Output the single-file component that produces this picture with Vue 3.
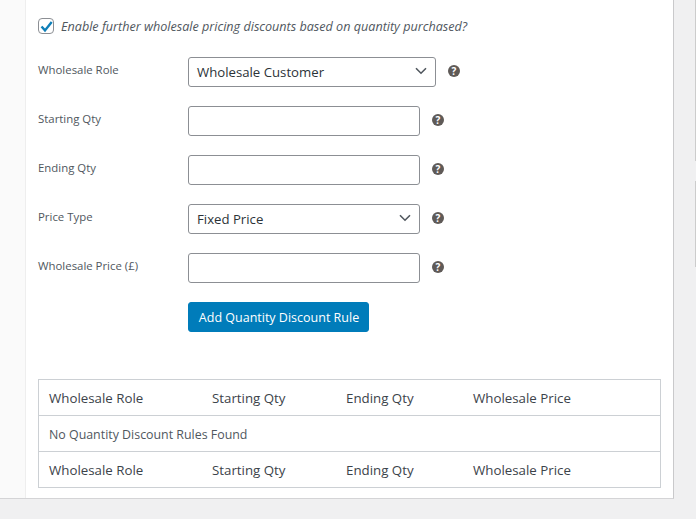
<template>
  <div class="page">
    <div class="panel">
      <div class="side"></div>
      <div class="content">
        <label class="enable">
          <span class="check">
            <svg width="13" height="13" viewBox="0 0 12 12"><path d="M1.4 6 L4.6 9.6 L10.8 1.8" fill="none" stroke="#0f7fb8" stroke-width="2.2" /></svg>
          </span>
          <em>Enable further wholesale pricing discounts based on quantity purchased?</em>
        </label>

        <div v-for="field in fields" :key="field.label" class="row">
          <span class="label">{{ field.label }}</span>
          <div class="control" :class="{ wide: field.wide }">
            {{ field.value }}
            <svg v-if="field.value" class="chev" width="12" height="8" viewBox="0 0 12 8"><path d="M1 1.2 L6 6.2 L11 1.2" fill="none" stroke="#50575e" stroke-width="1.6" /></svg>
          </div>
          <span class="help">?</span>
        </div>

        <button class="add">Add Quantity Discount Rule</button>

        <div class="rules">
          <div class="tr">
            <span v-for="c in columns" :key="c">{{ c }}</span>
          </div>
          <div class="tr empty">No Quantity Discount Rules Found</div>
          <div class="tr">
            <span v-for="c in columns" :key="c">{{ c }}</span>
          </div>
        </div>
      </div>
    </div>
    <div class="rail">
      <div class="box first"></div>
      <div class="box second"><div class="part"></div></div>
    </div>
  </div>
</template>

<script setup>
const fields = [
  { label: "Wholesale Role", value: "Wholesale Customer", wide: true },
  { label: "Starting Qty" },
  { label: "Ending Qty" },
  { label: "Price Type", value: "Fixed Price" },
  { label: "Wholesale Price (£)" },
];

const columns = ["Wholesale Role", "Starting Qty", "Ending Qty", "Wholesale Price"];
</script>

<style>
html,
body {
  margin: 0;
  background: #f0f0f1;
}
</style>

<style scoped>
.page {
  width: 696px;
  height: 519px;
  display: flex;
  align-items: flex-start;
  overflow: hidden;
  font-family: "Open Sans", "Noto Sans", sans-serif;
  color: #50575e;
}

.panel {
  width: 673px;
  height: 498px;
  display: flex;
  background: #fff;
  border-right: 1px solid #c9c9cb;
  border-bottom: 1px solid #d4d4d6;
  flex-shrink: 0;
}

.side {
  width: 25px;
  background: #fafafa;
  border-right: 1px solid #eee;
}

.content {
  flex: 1;
  padding: 18px 12px 0;
}

.enable {
  display: flex;
  align-items: center;
  gap: 7px;
  height: 16px;
  margin-bottom: 23px;
  font-size: 12.6px;
}

.check {
  width: 14px;
  height: 14px;
  border: 1px solid #8c8f94;
  border-radius: 4px;
  display: flex;
  align-items: center;
  justify-content: center;
}

.row {
  display: flex;
  align-items: center;
  height: 30px;
  margin-bottom: 19px;
}

.label {
  width: 150px;
  font-size: 11.4px;
  margin-top: -6px;
}

.control {
  width: 232px;
  height: 30px;
  box-sizing: border-box;
  border: 1px solid #8c8f94;
  border-radius: 3px;
  padding: 0 8px;
  display: flex;
  align-items: center;
  justify-content: space-between;
  font-size: 13.2px;
  color: #2c3338;
  background: #fff;
}

.control.wide {
  width: 248px;
}

.chev {
  margin-top: -2px;
}

.help {
  width: 12px;
  height: 12px;
  margin: -2px 0 0 12px;
  border-radius: 50%;
  background: #5f5a57;
  color: #fff;
  font-size: 10px;
  font-weight: 700;
  line-height: 12px;
  text-align: center;
}

.add {
  display: block;
  margin: 0 0 47px 150px;
  width: 181px;
  height: 30px;
  padding: 0 0 0 1px;
  border: 1px solid #007cba;
  border-radius: 3px;
  background: #007cba;
  color: #fff;
  font-family: inherit;
  font-size: 12.5px;
}

.rules {
  width: 621px;
  border: 1px solid #ccd0d4;
  font-size: 13.3px;
}

.tr {
  height: 35px;
  display: grid;
  grid-template-columns: 163px 134px 127px 1fr;
  align-items: center;
  padding-left: 10px;
  border-bottom: 1px solid #ccd0d4;
  color: #3c434a;
}

.tr:last-child {
  border-bottom: 0;
}

.tr.empty {
  display: flex;
  padding-top: 2px;
  height: 33px;
  font-size: 12.4px;
  color: #50575e;
}

.rail {
  margin-left: 21px;
  width: 1px;
}

.box {
  border-left: 1px solid #ccc;
}

.first {
  height: 160px;
  border-bottom: 1px solid #ccc;
}

.second {
  margin-top: 20px;
  height: 84px;
  border-top: 1px solid #ccc;
  border-bottom: 1px solid #ccc;
}

.part {
  height: 36px;
  border-bottom: 1px solid #ccc;
}
</style>
